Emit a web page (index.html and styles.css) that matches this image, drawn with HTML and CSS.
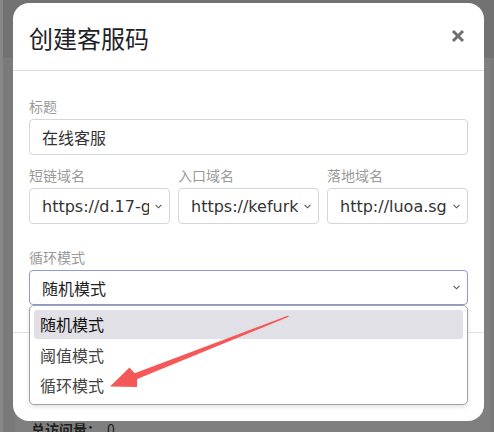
FILE: index.html
```html
<!DOCTYPE html>
<html lang="zh-CN">
<head>
<meta charset="utf-8">
<title>创建客服码</title>
<link rel="stylesheet" href="styles.css">
</head>
<body>
<div class="page">
  <div class="topbar"></div>
  <div class="content">
    <div class="stat">总访问量：<span class="stat-num">0</span></div>
  </div>
</div>

<div class="modal">
  <div class="modal-header">
    <h5 class="modal-title">创建客服码</h5>
    <svg class="close" width="14" height="14" viewBox="0 0 14 14"><path d="M2 2L12 12M12 2L2 12" stroke="#707070" stroke-width="3" stroke-linecap="butt"/></svg>
  </div>
  <div class="modal-body">
    <div class="group">
      <div class="label">标题</div>
      <div class="input">在线客服</div>
    </div>
    <div class="row">
      <div class="col">
        <div class="label">短链域名</div>
        <div class="select"><span class="val">https://d.17-gzs.com</span><svg class="chev" width="7" height="5" viewBox="0 0 7 5"><path d="M0.6 0.8L3.5 3.8L6.4 0.8" fill="none" stroke="#555" stroke-width="1.1"/></svg></div>
      </div>
      <div class="col">
        <div class="label">入口域名</div>
        <div class="select"><span class="val">https://kefurk.com</span><svg class="chev" width="7" height="5" viewBox="0 0 7 5"><path d="M0.6 0.8L3.5 3.8L6.4 0.8" fill="none" stroke="#555" stroke-width="1.1"/></svg></div>
      </div>
      <div class="col">
        <div class="label">落地域名</div>
        <div class="select"><span class="val">http://luoa.sgs.com</span><svg class="chev" width="7" height="5" viewBox="0 0 7 5"><path d="M0.6 0.8L3.5 3.8L6.4 0.8" fill="none" stroke="#555" stroke-width="1.1"/></svg></div>
      </div>
    </div>
    <div class="group group-mode">
      <div class="label">循环模式</div>
      <div class="select select-focus"><span class="val val-dark">随机模式</span><svg class="chev" width="7" height="5" viewBox="0 0 7 5"><path d="M0.6 0.8L3.5 3.8L6.4 0.8" fill="none" stroke="#555" stroke-width="1.1"/></svg></div>
      <div class="dropdown">
        <div class="option option-active">随机模式</div>
        <div class="option">阈值模式</div>
        <div class="option">循环模式</div>
      </div>
    </div>
  </div>
  <div class="modal-footer"></div>
</div>

<svg class="annot" width="494" height="432" viewBox="0 0 494 432">
  <polygon points="110,386.5 129.5,367.5 134.6,373.2 288.2,315.4 288.8,316.8 137.2,379 137,387" fill="#f55858"/>
</svg>
</body>
</html>
```

FILE: styles.css
```css
html, body {
  margin: 0;
  padding: 0;
}
body {
  width: 494px;
  height: 432px;
  overflow: hidden;
  background: #7a7a7a;
  font-family: "DejaVu Sans", "Noto Sans CJK SC", sans-serif;
  position: relative;
}
.page {
  border-left: 3px solid #878787;
  height: 432px;
  box-sizing: border-box;
}
.topbar {
  height: 58px;
  background: #727272;
}
.content {
  margin: 0 4px 0 12px;
  background: #7f7f7f;
  height: 374px;
  padding: 361px 16px 0;
  box-sizing: border-box;
}
.stat {
  font-family: "Noto Sans CJK SC", sans-serif;
  font-size: 14px;
  line-height: 20px;
  font-weight: 700;
  color: #1e1e1e;
}
.stat-num {
  margin-left: 6px;
  font-weight: 400;
}

.modal {
  position: absolute;
  left: 13px;
  top: 3px;
  width: 471px;
  height: 418px;
  background: #fff;
  border-radius: 16px;
  display: flex;
  flex-direction: column;
  z-index: 1;
}
.modal-header {
  height: 68px;
  box-sizing: border-box;
  padding: 20px 19px 0 16px;
  border-bottom: 1px solid #dedede;
  display: flex;
  justify-content: space-between;
  align-items: flex-start;
  flex: none;
}
.modal-title {
  margin: 0;
  font-family: "Noto Sans CJK SC", sans-serif;
  font-weight: 400;
  font-size: 24px;
  line-height: 30px;
  color: #1f2327;
}
.close {
  margin-top: 6px;
}
.modal-body {
  padding: 25px 16px 27px;
  flex: none;
}
.label {
  font-family: "Noto Sans CJK SC", sans-serif;
  font-size: 14px;
  line-height: 20px;
  color: #9a9a9a;
  margin-bottom: 3px;
}
.input {
  height: 36px;
  box-sizing: border-box;
  border: 1px solid #d3d6da;
  border-radius: 4px;
  padding: 0 12px;
  display: flex;
  align-items: center;
  font-family: "Noto Sans CJK SC", sans-serif;
  font-size: 16px;
  color: #333;
}
.row {
  margin-top: 10px;
  display: grid;
  grid-template-columns: repeat(3, minmax(0, 1fr));
  gap: 8px;
}
.col {
  min-width: 0;
}
.select {
  height: 36px;
  box-sizing: border-box;
  border: 1px solid #d3d6da;
  border-radius: 4px;
  padding: 0 6px 0 12px;
  display: flex;
  align-items: center;
  font-size: 16px;
  color: #333;
}
.val {
  flex: 1;
  min-width: 0;
  overflow: hidden;
  white-space: nowrap;
  margin-right: 6px;
}
.val-dark {
  font-family: "Noto Sans CJK SC", sans-serif;
  color: #222;
}
.chev {
  flex: none;
  margin-right: 1px;
}
.group-mode {
  margin-top: 23px;
  position: relative;
}
.select-focus {
  height: 35px;
  border-color: #8c99dc;
}
.dropdown {
  position: absolute;
  left: 0;
  right: 0;
  top: 100%;
  box-sizing: border-box;
  height: 100px;
  border: 1px solid #a2a2a2;
  border-radius: 5px;
  background: #fff;
  padding: 4px;
  box-shadow: 0 2px 4px rgba(0, 0, 0, 0.12);
  z-index: 2;
}
.option {
  height: 30px;
  line-height: 30px;
  padding-left: 6px;
  font-family: "Noto Sans CJK SC", sans-serif;
  font-size: 16px;
  color: #444;
  border-radius: 3px;
}
.option-active {
  background: #e1e0e6;
  color: #111;
  height: 29px;
  line-height: 29px;
  margin-bottom: 1px;
}
.modal-footer {
  border-top: 1px solid #e2e2e2;
  flex: 1;
}
.annot {
  position: absolute;
  left: 0;
  top: 0;
  pointer-events: none;
  z-index: 10;
}
```
